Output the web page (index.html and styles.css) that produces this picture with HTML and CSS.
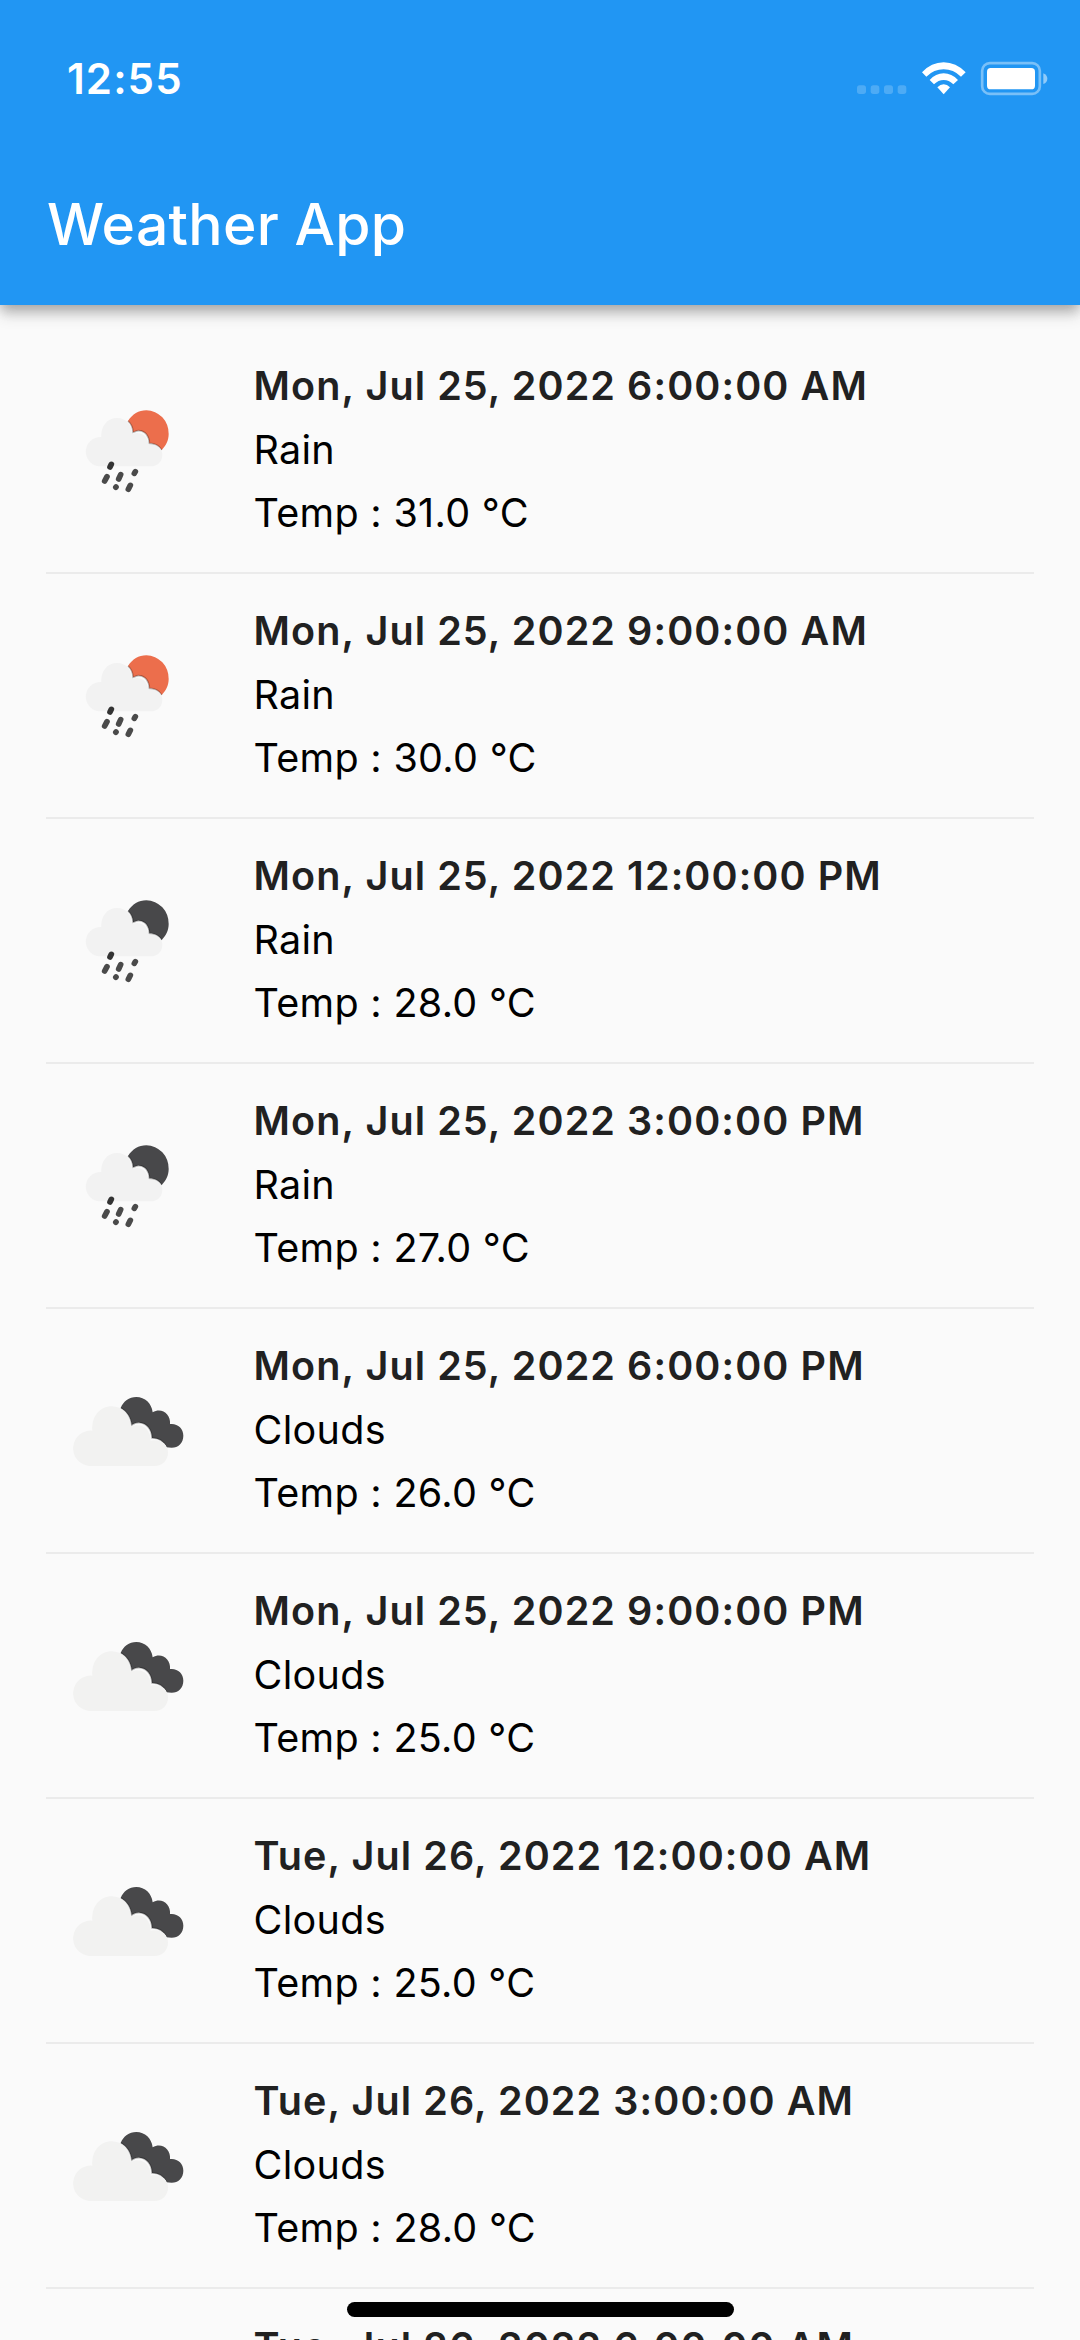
FILE: index.html
```html
<!DOCTYPE html>
<html lang="en">
<head>
<meta charset="utf-8">
<title>Weather App</title>
<link rel="stylesheet" href="styles.css">
</head>
<body>
<svg class="defs" width="0" height="0" aria-hidden="true">
  <defs>
    <symbol id="rain" viewBox="0 0 420 360">
      <path fill="currentColor" d="M204 93C217 73 236 61 259 61A67 69 0 0 1 326 132C326 151 318 167 305 180C298 168 284 160 268 160C268 139 256 123 238 122C231 121 225 125 219 127C219 113 213 101 204 93Z"/>
      <path class="edge" d="M204 93C213 101 219 113 219 127C225 125 231 121 238 122C256 123 268 139 268 160C284 160 298 168 305 180"/>
      <path fill="#f2f2f2" d="M119 229A44 44 0 0 1 124 141C122 108 142 84 171 84C198 84 215 104 216 132C243 122 264 139 265 165C288 160 307 174 307 194C307 215 292 229 272 229Z"/>
      <g stroke="#4a4a4a" stroke-width="17" stroke-linecap="round">
        <path stroke="#333" d="M154 223L150 231"/>
        <path d="M141 260L134 273M182 254L176 267M226 245L223 250M168 291L167.500 291.500M211 286L205 298"/>
      </g>
    </symbol>
    <symbol id="clouds" viewBox="0 0 420 300">
      <path fill="#48484a" d="M182 84C190 64 207 51 229 51C255 51 275 70 278 97C305 81 333 103 330 132C352 129 370 145 370 167C370 189 355 203 335 203L319 202C313 185 297 174 276 174C276 148 259 129 239 128C230 127 222 130 215 135C213 113 201 94 182 84Z"/>
      <path class="edge" d="M182 84C201 94 213 113 215 135C222 130 230 127 239 128C259 129 276 148 276 174C297 174 313 185 319 202"/>
      <path fill="#f2f2f1" d="M88 258A53 53 0 0 1 97 152C94 109 120 79 155 79C188 79 211 104 212 141C245 125 273 148 272 182C301 176 324 192 324 217C324 241 308 258 283 258Z"/>
    </symbol>
  </defs>
</svg>
<div class="screen">
  <header class="app-bar">
    <div class="status">
      <span class="time">12:55</span>
      <svg class="indicators" width="220" height="60" viewBox="0 0 660 180" aria-hidden="true">
        <g fill="#fff" fill-opacity=".2">
          <rect x="51" y="106" width="27" height="26" rx="8"/>
          <rect x="92" y="106" width="26" height="26" rx="8"/>
          <rect x="132" y="106" width="27" height="26" rx="8"/>
          <rect x="173" y="106" width="26" height="26" rx="8"/>
        </g>
        <g fill="#fff">
          <path d="M246 67Q274 37 311 37Q348 37 377 67L363 80Q340 58 311 58Q282 58 259 80Z"/>
          <path d="M269 90Q287 70 311 70Q335 70 354 90L340 103Q327 90 311 90Q295 90 282 103Z"/>
          <path d="M292 112Q301 103 311 103Q321 103 330 112L311 133Z"/>
          <rect x="441" y="54" width="144" height="64" rx="11"/>
        </g>
        <rect x="426.500" y="39.500" width="173" height="92" rx="23" fill="none" stroke="#fff" stroke-opacity=".4" stroke-width="8"/>
        <path d="M610 70Q622 76 622 86Q622 97 610 102Z" fill="#fff" fill-opacity=".5"/>
      </svg>
    </div>
    <h1 class="title">Weather App</h1>
  </header>
  <main class="list">
    <article class="row"><svg class="icon day"><use href="#rain"/></svg><div class="info"><p class="date">Mon, Jul 25, 2022 6:00:00 AM</p><p>Rain</p><p class="temp">Temp : 31.0 °C</p></div></article>
    <article class="row"><svg class="icon day"><use href="#rain"/></svg><div class="info"><p class="date">Mon, Jul 25, 2022 9:00:00 AM</p><p>Rain</p><p class="temp">Temp : 30.0 °C</p></div></article>
    <article class="row"><svg class="icon"><use href="#rain"/></svg><div class="info"><p class="date">Mon, Jul 25, 2022 12:00:00 PM</p><p>Rain</p><p class="temp">Temp : 28.0 °C</p></div></article>
    <article class="row"><svg class="icon"><use href="#rain"/></svg><div class="info"><p class="date">Mon, Jul 25, 2022 3:00:00 PM</p><p>Rain</p><p class="temp">Temp : 27.0 °C</p></div></article>
    <article class="row"><svg class="icon cloudy"><use href="#clouds"/></svg><div class="info"><p class="date">Mon, Jul 25, 2022 6:00:00 PM</p><p>Clouds</p><p class="temp">Temp : 26.0 °C</p></div></article>
    <article class="row"><svg class="icon cloudy"><use href="#clouds"/></svg><div class="info"><p class="date">Mon, Jul 25, 2022 9:00:00 PM</p><p>Clouds</p><p class="temp">Temp : 25.0 °C</p></div></article>
    <article class="row"><svg class="icon cloudy"><use href="#clouds"/></svg><div class="info"><p class="date">Tue, Jul 26, 2022 12:00:00 AM</p><p>Clouds</p><p class="temp">Temp : 25.0 °C</p></div></article>
    <article class="row"><svg class="icon cloudy"><use href="#clouds"/></svg><div class="info"><p class="date">Tue, Jul 26, 2022 3:00:00 AM</p><p>Clouds</p><p class="temp">Temp : 28.0 °C</p></div></article>
    <article class="row"><div class="icon"></div><div class="info"><p class="date">Tue, Jul 26, 2022 6:00:00 AM</p></div></article>
  </main>
  <div class="home-indicator"></div>
</div>
</body>
</html>
```

FILE: styles.css
```css
* { box-sizing: border-box; }
html, body { margin: 0; overflow: hidden; }
p, h1 { margin: 0; }
.defs { position: absolute; }
.screen {
  position: relative;
  width: 1080px;
  height: 2340px;
  overflow: hidden;
  background: #fafafa;
  color: #000;
  font-family: Inter, "Liberation Sans", sans-serif;
}
.app-bar {
  position: relative;
  height: 305px;
  background: #2196f3;
  color: #fff;
  box-shadow: 0 6px 12px -2px rgba(0,0,0,.2), 0 11px 14px rgba(0,0,0,.12), 0 3px 14px rgba(0,0,0,.1);
}
.status {
  display: flex;
  justify-content: space-between;
  padding: 50px 20px 0 67px;
  height: 160px;
}
.time { font-size: 42px; font-weight: 600; line-height: 58px; letter-spacing: 1.1px; }
.indicators { display: block; }
.title {
  padding-left: 47px;
  font-size: 57px;
  font-weight: 500;
  line-height: 130px;
  letter-spacing: .3px;
}
.list { padding: 24px 46px 0; }
.row {
  display: flex;
  align-items: center;
  height: 245px;
  padding-left: 14px;
  border-bottom: 2px solid #ebebeb;
}
.row:last-child { align-items: flex-start; padding-top: 27px; }
.icon { flex: none; width: 140px; height: 120px; margin-top: -2px; color: #48484a; }
.day { color: #ec6e4c; }
.cloudy { height: 100px; }
.edge { fill: none; stroke: #000; stroke-opacity: .25; stroke-width: 5; }
.info {
  padding-left: 53.500px;
  font-size: 39.500px;
  line-height: 63.400px;
  letter-spacing: .3px;
  white-space: nowrap;
}
.date { font-weight: 600; color: #212121; letter-spacing: 1.1px; }
.home-indicator {
  position: absolute;
  left: 347px;
  top: 2302px;
  width: 387px;
  height: 15px;
  border-radius: 8px;
  background: #000;
}
```
